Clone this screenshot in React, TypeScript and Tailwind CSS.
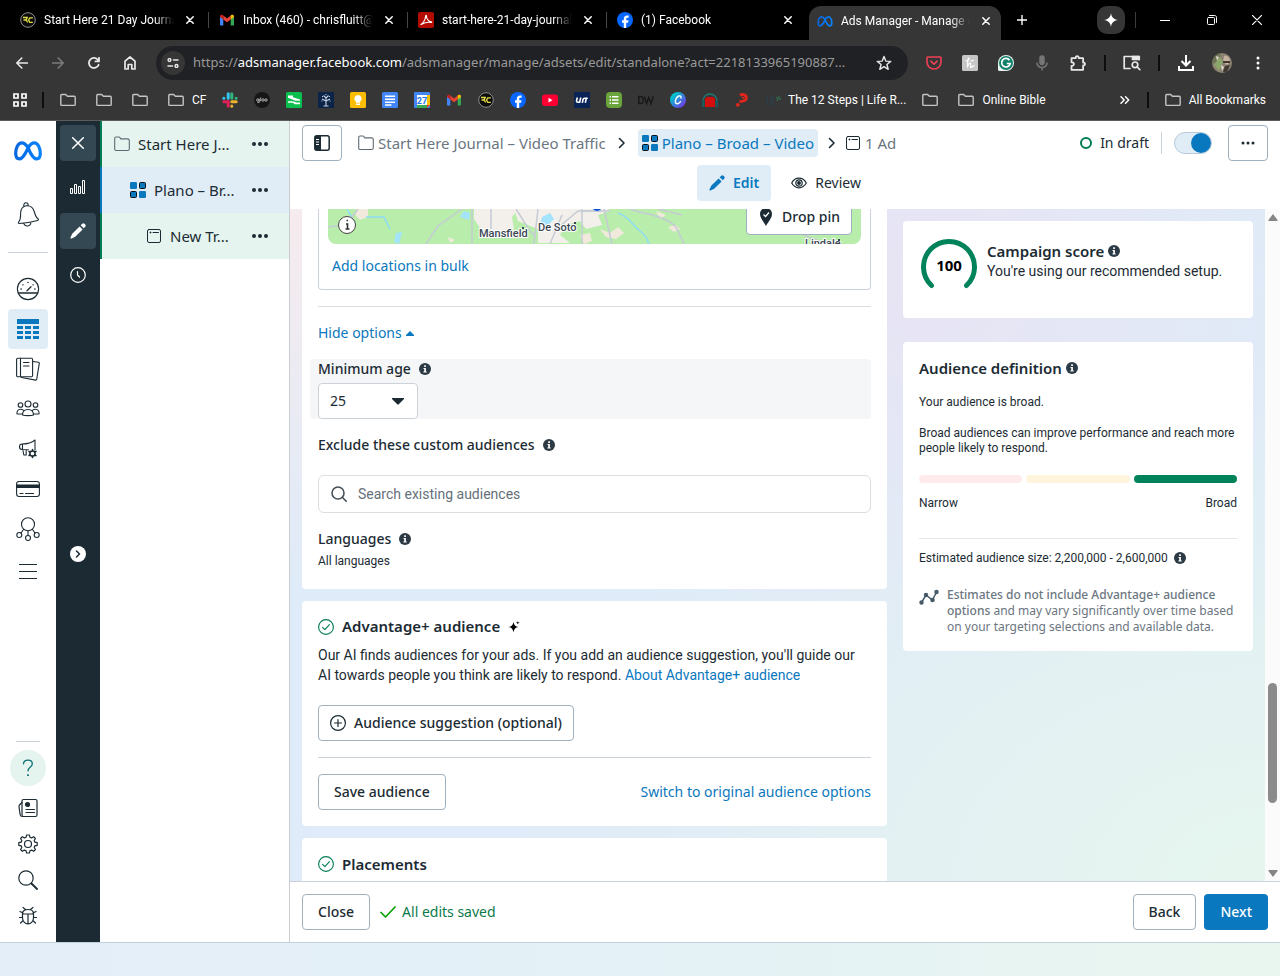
import { ReactNode } from 'react'

type Props = { children: ReactNode }

const line = {
	fill: 'none',
	stroke: 'currentColor',
	strokeLinecap: 'round' as const,
	strokeLinejoin: 'round' as const
}

/* ---------- shared icons ---------- */

function Folder({ className = 'size-4' }) {
	return (
		<svg viewBox="0 0 16 16" className={className} {...line} strokeWidth="1.4">
			<path d="M.8 12.4V3.4c0-.5.4-.9.9-.9h4l1.7 1.8h6.9c.5 0 .9.4.9.9v7.2c0 .6-.4 1-.9 1H1.7c-.5 0-.9-.4-.9-1z" />
		</svg>
	)
}

function AppFolder() {
	return (
		<svg viewBox="0 0 16 16" className="size-4 shrink-0 text-[#5f6b74]" {...line} strokeWidth="1.1">
			<path d="M.7 13V2.6C.7 1.6 1.2 1 2.2 1h2.6c.6 0 1 .3 1.3.8l.6 1.1h6.9c1 0 1.7.6 1.7 1.6V13c0 .9-.6 1.5-1.5 1.5H2.2C1.300 14.500.7 13.900.7 13z" />
		</svg>
	)
}

function AdSet() {
	return (
		<svg viewBox="0 0 16 16" className="size-4 shrink-0">
			<rect width="7" height="7" rx="1.200" fill="#0a78be" />
			<rect x="9.500" y=".5" width="6" height="6" rx="1" fill="#0a78be" stroke="#0b1016" />
			<rect x=".5" y="9.500" width="6" height="6" rx="1" fill="#0a78be" stroke="#0b1016" />
			<rect x="9" y="9" width="7" height="7" rx="1.200" fill="#0a78be" />
		</svg>
	)
}

function AdIcon() {
	return (
		<svg viewBox="0 0 14 14" className="size-[14px] shrink-0 text-[#1c2b33]" {...line} strokeWidth="1">
			<rect x=".5" y=".5" width="13" height="13" rx="1.500" />
			<path d="M6 3.500h5.500M3 3.500h1M3.500 3v1" />
		</svg>
	)
}

function Info() {
	return (
		<svg viewBox="0 0 12 12" className="size-3 shrink-0">
			<circle cx="6" cy="6" r="6" fill="#2b3a44" />
			<path d="M5.200 2.300h1.700v1.600H5.200zM4.500 5h2.400v3.600h.8v1H4.400v-1h.8V6h-.7z" fill="#fff" />
		</svg>
	)
}

function Pencil() {
	return (
		<svg viewBox="0 0 16 16" className="size-4" fill="currentColor">
			<path d="M9.600 3.400 12.600 6.400 5.200 13.800 1.600 15.500C.9 15.800.2 15.100.5 14.400L2.200 10.800zM10.700 2.300 12.300.8c.7-.7 1.500-.7 2.200 0l.7.7c.7.7.7 1.500 0 2.200L13.700 5.300z" />
		</svg>
	)
}

function Dots() {
	return (
		<svg viewBox="0 0 16 4" className="h-1 w-4" fill="#1c2b33">
			<circle cx="2" cy="2" r="2" />
			<circle cx="8" cy="2" r="2" />
			<circle cx="14" cy="2" r="2" />
		</svg>
	)
}

function Chevron() {
	return (
		<svg viewBox="0 0 8 12" className="h-3 w-2 shrink-0" {...line} strokeWidth="1.600">
			<path d="M1.500 1.500 6 6l-4.500 4.500" />
		</svg>
	)
}

function MetaLogo({ className = '' }) {
	return (
		<svg viewBox="0 0 28 20" className={className} fill="none" stroke="url(#meta)" strokeWidth="3.200">
			<defs>
				<linearGradient id="meta">
					<stop offset="0" stopColor="#0668e1" />
					<stop offset="1" stopColor="#0a82fb" />
				</linearGradient>
			</defs>
			<path d="M14 6.500C11.800 3.200 10 1.800 7.800 1.800 4.200 1.800 1.700 7 1.700 12.300c0 3.500 1.300 5.600 3.700 5.600 2.300 0 3.800-1.800 6.200-6l2.400-5C16.200 3.200 18 1.800 20.200 1.800c3.600 0 6.100 5.200 6.100 10.500 0 3.500-1.300 5.600-3.700 5.600-2.300 0-3.800-1.800-6.200-6z" />
		</svg>
	)
}

function CheckRing() {
	return (
		<svg viewBox="0 0 16 16" className="size-4" {...line} stroke="#007d53" strokeWidth="1.100">
			<circle cx="8" cy="8" r="7.400" />
			<path d="m4.600 8.400 2.300 2.300 4.500-5" />
		</svg>
	)
}

/* ---------- browser frame ---------- */

function FacebookIcon() {
	return (
		<svg viewBox="0 0 16 16" className="size-4 shrink-0">
			<circle cx="8" cy="8" r="8" fill="#0866ff" />
			<path d="M6.800 16v-5.300H5V8.200h1.800V7.100c0-2.500 1.200-3.700 3.500-3.700.5 0 1 .1 1.300.2v2.200h-.9c-1.100 0-1.500.4-1.500 1.400v1h2.300l-.4 2.500H9.200V16z" fill="#fff" />
		</svg>
	)
}

function RcIcon() {
	return (
		<svg viewBox="0 0 16 16" className="size-4 shrink-0" fill="none">
			<circle cx="8" cy="8" r="7.300" fill="#0c0c0c" stroke="#8d8d8d" />
			<path d="M3 5.500h4.200L6.200 8l1.500 2.300M3.500 8h3M12.800 5.800H9.800L8.500 8l1.300 2.300h3" stroke="#e6e14a" strokeWidth="1.300" />
		</svg>
	)
}

function GmailIcon() {
	return (
		<svg viewBox="0 0 16 16" className="size-4 shrink-0">
			<path d="M1 4v8.500c0 .6.4 1 1 1h2.300V7z" fill="#4285f4" />
			<path d="M15 4v8.500c0 .6-.4 1-1 1h-2.300V7z" fill="#34a853" />
			<path d="M4.300 3.500 8 6.400l3.700-2.900v4L8 10.300 4.300 7.500z" fill="#ea4335" />
			<path d="M1 4.300C1 2.600 2.700 2.200 3.800 3.100l.5.4v4L1 5z" fill="#c5221f" />
			<path d="M15 4.300c0-1.700-1.700-2.100-2.800-1.200l-.5.4v4L15 5z" fill="#fbbc04" />
		</svg>
	)
}

function PdfIcon() {
	return (
		<svg viewBox="0 0 16 16" className="size-4 shrink-0">
			<rect width="16" height="16" rx="2" fill="#b30b00" />
			<path d="M3 12.300c1.500-.3 4.400-4.300 4.700-8.200.1-1 .9-1 .8 0-.2 2.500 2 5.500 4.600 5.600.9.100.8.900 0 .8-2.700-.4-6.500.1-8.900 1.500-.8.500-1.800.6-1.200.3z" fill="none" stroke="#fff" strokeWidth="1.100" />
		</svg>
	)
}

const tabs = [
	{ title: 'Start Here 21 Day Journal', icon: <RcIcon /> },
	{ title: 'Inbox (460) - chrisfluitt@gmail', icon: <GmailIcon /> },
	{ title: 'start-here-21-day-journal', icon: <PdfIcon /> },
	{ title: '(1) Facebook', icon: <FacebookIcon /> }
]

function CloseX() {
	return (
		<svg viewBox="0 0 8 8" className="size-2" {...line} strokeWidth="1.500">
			<path d="m.8.8 6.400 6.400M7.200.8.8 7.200" />
		</svg>
	)
}

function TabBody({ title, icon }: { title: string; icon: ReactNode }) {
	return (
		<>
			{icon}
			<span className="ml-2 h-4 min-w-0 flex-1 overflow-hidden mask-r-from-85% text-left text-xs leading-4 whitespace-nowrap">
				{title}
			</span>
			<button aria-label="Close tab" className="ml-3 shrink-0">
				<CloseX />
			</button>
		</>
	)
}

function TabStrip() {
	return (
		<div className="flex h-10 items-center bg-black pl-[10px]">
			{tabs.map((tab, i) => (
				<div key={tab.title} className="flex w-[199px] min-w-0 items-center">
					<div className="flex min-w-0 flex-1 items-center pr-[14px] pl-[10px]">
						<TabBody {...tab} />
					</div>
					{i < 3 && <span className="h-4 w-px bg-[#47474a]" />}
				</div>
			))}
			<div className="ml-[3px] flex h-[34px] w-[192px] min-w-0 items-center self-end rounded-t-xl bg-[#363636] pr-[11px] pb-1 pl-2">
				<TabBody title="Ads Manager - Manage ads" icon={<MetaLogo className="h-[11px] w-4 shrink-0" />} />
			</div>
			<button aria-label="New tab" className="ml-4 shrink-0">
				<svg viewBox="0 0 10 10" className="size-[10px]" {...line} strokeWidth="1.400">
					<path d="M5 0v10M0 5h10" />
				</svg>
			</button>
			<div className="ml-auto flex shrink-0 items-center">
				<button aria-label="Gemini" className="grid size-7 place-items-center rounded-[10px] bg-[#363636]">
					<svg viewBox="0 0 14 14" className="size-[14px]" fill="#fff">
						<path d="M7 0c.5 4 2.500 6.500 7 7-4.500.5-6.500 3-7 7-.5-4-2.500-6.500-7-7 4.500-.5 6.500-3 7-7z" />
					</svg>
				</button>
				<span className="ml-[10px] h-4 w-px bg-[#3c3c3c]" />
				<button aria-label="Minimize" className="grid h-10 w-[46px] place-items-center pl-3">
					<svg viewBox="0 0 10 10" className="size-[10px]" {...line}>
						<path d="M0 5.500h10" />
					</svg>
				</button>
				<button aria-label="Restore" className="grid h-10 w-[60px] place-items-center">
					<svg viewBox="0 0 10 10" className="size-[10px]" {...line}>
						<rect x=".5" y="2.500" width="7" height="7" rx="1" />
						<path d="M2.500.5h5.200c1 0 1.800.8 1.800 1.800v5.200" />
					</svg>
				</button>
				<button aria-label="Close window" className="grid h-10 w-[38px] place-items-center pr-4 pl-2">
					<svg viewBox="0 0 10 10" className="size-[10px]" {...line} strokeWidth="1.200">
						<path d="m.3.3 9.400 9.400M9.700.3.3 9.700" />
					</svg>
				</button>
			</div>
		</div>
	)
}

function ToolButton({ label, children }: Props & { label: string }) {
	return (
		<button aria-label={label} className="grid size-9 shrink-0 place-items-center">
			{children}
		</button>
	)
}

function BarRule() {
	return <span className="mx-2 h-4 w-[2px] shrink-0 bg-[#0d0d0d]" />
}

function Toolbar() {
	return (
		<div className="flex h-[46px] items-center bg-[#363636] px-1 text-[#e8e8e8]">
			<ToolButton label="Back">
				<svg viewBox="0 0 12 12" className="size-3" {...line} strokeWidth="1.600">
					<path d="M11.500 6H.8M5.800 1 .8 6l5 5" />
				</svg>
			</ToolButton>
			<ToolButton label="Forward">
				<svg viewBox="0 0 12 12" className="size-3 text-[#7c7c7c]" {...line} strokeWidth="1.600">
					<path d="M.5 6h10.700M6.200 1l5 5-5 5" />
				</svg>
			</ToolButton>
			<ToolButton label="Reload">
				<svg viewBox="0 0 12 12" className="size-3" {...line} strokeWidth="1.800">
					<path d="M10.600 7.800A5 5 0 1 1 10 3M11 .8v3.600H7.400" />
				</svg>
			</ToolButton>
			<ToolButton label="Home">
				<svg viewBox="0 0 12 14" className="h-[14px] w-3" {...line} strokeWidth="1.700">
					<path d="M1 5.200 6 1l5 4.200V13H7.800V8.500H4.200V13H1z" />
				</svg>
			</ToolButton>
			<form className="ml-2 flex h-[34px] min-w-0 flex-1 items-center rounded-full bg-[#202124] pr-4 pl-[5px]">
				<span className="grid size-6 shrink-0 place-items-center rounded-full bg-[#363636]">
					<svg viewBox="0 0 12 10" className="h-[10px] w-3" {...line} strokeWidth="1.500">
						<circle cx="2.500" cy="2" r="1.400" />
						<path d="M6.500 2H11M1 8h4.500" />
						<circle cx="9.500" cy="8" r="1.400" />
					</svg>
				</span>
				<p className="ml-2 min-w-0 flex-1 truncate font-['Noto_Sans',sans-serif] text-[13px] text-[#9a9a9a]">
					https://<span className="text-white">adsmanager.facebook.com</span>
					/adsmanager/manage/adsets/edit/standalone?act=2218133965190887...
				</p>
				<button type="button" aria-label="Bookmark this page" className="ml-2">
					<svg viewBox="0 0 16 16" className="size-4" {...line} strokeWidth="1.400">
						<path d="m8 1.500 1.800 4.600 4.900.3-3.800 3.100 1.300 4.800L8 11.600l-4.200 2.700 1.300-4.800L1.300 6.400l4.900-.3z" />
					</svg>
				</button>
			</form>
			<div className="ml-2 flex items-center">
				<ToolButton label="Pocket">
					<svg viewBox="0 0 16 14" className="h-[14px] w-4" {...line} stroke="#ef4056" strokeWidth="1.600">
						<path d="M1.800 1h12.400c.5 0 .8.3.8.8V6c0 4-3 7-7 7S1 10 1 6V1.800c0-.5.3-.8.8-.8zM4.800 5.200 8 8.200l3.200-3" />
					</svg>
				</ToolButton>
				<ToolButton label="Honey">
					<svg viewBox="0 0 16 16" className="size-4" fill="none">
						<rect width="16" height="16" rx="1.500" fill="#c6c6c6" />
						<path d="M4 6C6 5.500 7.500 4 7 3.200c-.8-.8-1.500 3-1.500 9.300C6 9.500 7.500 8 8.500 8.300c1 .4-.3 3.500 0 4 .6.500 2-.5 3.500-1.800M9 6l2.500-.8" stroke="#fff" strokeWidth="1.200" strokeLinecap="round" />
					</svg>
				</ToolButton>
				<ToolButton label="Grammarly">
					<svg viewBox="0 0 16 16" className="size-4" fill="none">
						<path d="M8 0a8 8 0 1 1 0 16H1.200C.5 16 0 15.500 0 14.800V8a8 8 0 0 1 8-8z" fill="#e9f4f1" />
						<circle cx="8" cy="8" r="7" fill="#11806a" />
						<path d="M11.500 5.200A4.300 4.300 0 1 0 12.200 8.500H8.800" stroke="#fff" strokeWidth="1.700" />
					</svg>
				</ToolButton>
				<ToolButton label="Voice">
					<svg viewBox="0 0 12 16" className="h-4 w-3 text-[#767676]" fill="none" stroke="currentColor" strokeWidth="1.500">
						<rect x="4" y="1" width="4" height="8.500" rx="2" fill="currentColor" />
						<path d="M.9 7.500a5.100 5.100 0 0 0 10.200 0M6 12.500v3" />
					</svg>
				</ToolButton>
				<ToolButton label="Extensions">
					<svg viewBox="0 0 16 16" className="size-4" {...line} strokeWidth="1.800">
						<path d="M1.500 3.200h4.200c-.4-2.800 3.300-2.800 3 0h4.400v4.300c2.500-.2 2.500 3.200 0 3v4.300H1.500v-4c3.200.3 3.200-3.800 0-3.500z" />
					</svg>
				</ToolButton>
				<BarRule />
				<ToolButton label="Search side panel">
					<svg viewBox="0 0 18 16" className="h-4 w-[18px]" {...line} strokeWidth="1.700">
						<path d="M7 13.500H1.200v-12h15v3" />
						<path d="M9.500 1.500h6.700v3H9.500z" fill="currentColor" />
						<circle cx="12" cy="9.800" r="2.800" />
						<path d="m14.200 12 2.600 2.600" />
					</svg>
				</ToolButton>
				<BarRule />
				<ToolButton label="Downloads">
					<svg viewBox="0 0 16 16" className="size-4 text-white" fill="none" stroke="currentColor" strokeWidth="2">
						<path d="M8 0v10M3.500 6 8 10.500 12.500 6M1 11v4h14v-4" />
					</svg>
				</ToolButton>
				<ToolButton label="Profile">
					<svg viewBox="0 0 20 20" className="size-5 rounded-full">
						<rect width="20" height="20" fill="#8b8172" />
						<path d="M0 0h9l-3 8-6 3z" fill="#6b7353" />
						<path d="M2 12 8 4l3 5-4 9z" fill="#8ba66b" />
						<path d="M12 3c4-1 6 2 6 6l-3 3-4-3z" fill="#c5b19d" />
						<path d="M11 8h7v2h-7zM13 13l5-1-3 7h-4z" fill="#413832" />
						<path d="M4 3l3 1-2 4zM9 12l3 2-2 4z" fill="#e5ded1" />
					</svg>
				</ToolButton>
				<ToolButton label="Browser menu">
					<svg viewBox="0 0 4 14" className="h-[14px] w-1" fill="#fff">
						<circle cx="2" cy="2" r="1.500" />
						<circle cx="2" cy="7" r="1.500" />
						<circle cx="2" cy="12" r="1.500" />
					</svg>
				</ToolButton>
			</div>
		</div>
	)
}

function Mark({ children }: Props) {
	return (
		<a href="#" className="grid h-8 w-8 shrink-0 place-items-center">
			<svg viewBox="0 0 16 16" className="size-4" fill="none">
				{children}
			</svg>
		</a>
	)
}

function Bookmarks() {
	return (
		<nav className="flex h-[35px] items-center overflow-hidden border-b border-[#5c5c5c] bg-[#363636] pb-[6px] text-xs text-white">
			<button aria-label="Apps" className="grid w-10 shrink-0 place-items-center">
				<svg viewBox="0 0 14 14" className="size-[14px]" fill="none" stroke="#fff" strokeWidth="1.700">
					<path d="M1 1h4v4H1zM9 1h4v4H9zM1 9h4v4H1zM9 9h4v4H9z" />
				</svg>
			</button>
			<span className="mr-[6px] ml-[2px] h-4 w-[2px] shrink-0 bg-[#0d0d0d]" />
			{[0, 1, 2].map(n => (
				<a key={n} href="#" aria-label="Folder" className="grid w-9 shrink-0 place-items-center text-[#c4c4c4]">
					<Folder />
				</a>
			))}
			<a href="#" className="flex w-14 shrink-0 items-center gap-2 pl-[10px]">
				<Folder className="size-4 text-[#c4c4c4]" />
				CF
			</a>
			<Mark>
				<g strokeWidth="3" strokeLinecap="round">
					<path d="M6.200 1.800v4.400M1.800 6.200h.1" stroke="#36c5f0" />
					<path d="M9.800 1.800v4.400M14.200 6.200h-.1" stroke="#2eb67d" />
					<path d="M9.800 9.800h4.400M9.800 14.200v-.1" stroke="#ecb22e" />
					<path d="M6.200 14.200V9.800H1.800" stroke="#e01e5a" />
				</g>
			</Mark>
			<Mark>
				<circle cx="8" cy="8" r="8" fill="#161616" />
				<g stroke="#bdbdbd" strokeWidth=".9">
					<circle cx="3.800" cy="8" r="1.200" />
					<path d="M5.200 6.800v3.700H3.500M6.700 5.500v3.700" />
					<circle cx="9" cy="8" r="1.200" />
					<circle cx="12" cy="8" r="1.200" />
				</g>
			</Mark>
			<Mark>
				<rect width="16" height="16" rx="1.500" fill="#0bbf4e" />
				<path d="M2 3.500h5v1.800l7 2.200v1.300H9.500L2 5.700zM2 9.200h5l3.500 1.300H14v1.700H8.500L7 10.800H2z" fill="#fff" />
			</Mark>
			<Mark>
				<path d="M0 0h16v16H0z" fill="#0b2447" />
				<path d="M8 14V6M5.500 14h5M8 9 4 7M8 9l4-2M8 6 5.500 3.500M8 6l2.500-2.500M4 4.500h1M11 4.500h1M7.500 2.500h1M3.500 9h1M11.500 9h1" stroke="#c9d2e0" strokeWidth="1.100" />
			</Mark>
			<Mark>
				<rect width="16" height="16" rx="1.500" fill="#fbbc04" />
				<path d="M8 3a3.700 3.700 0 0 1 2 6.800v1H6v-1A3.700 3.700 0 0 1 8 3zM6 11.500h4V13H6z" fill="#fff" />
			</Mark>
			<Mark>
				<rect width="16" height="16" rx="1.500" fill="#4285f4" />
				<path d="M3 4.200h10M3 7.200h10M3 10.200h10M3 13h6.500" stroke="#fff" strokeWidth="1.600" />
			</Mark>
			<Mark>
				<rect width="16" height="16" rx="1" fill="#4285f4" />
				<path d="M13 3h3v10h-3z" fill="#fbbc04" />
				<path d="M3 13h10v3H3z" fill="#34a853" />
				<path d="m13 13 3 0-3 3z" fill="#ea4335" />
				<path d="M3 3h10v10H3z" fill="#fff" />
				<text x="8" y="11.500" textAnchor="middle" className="text-[9px] font-bold" fill="#1a73e8">27</text>
			</Mark>
			<a href="#" aria-label="Gmail" className="grid w-8 shrink-0 place-items-center">
				<GmailIcon />
			</a>
			<a href="#" aria-label="RC" className="grid w-8 shrink-0 place-items-center">
				<RcIcon />
			</a>
			<a href="#" aria-label="Facebook" className="grid w-8 shrink-0 place-items-center">
				<FacebookIcon />
			</a>
			<Mark>
				<rect y="2.500" width="16" height="11.500" rx="3" fill="#ff0033" />
				<path d="m6.500 5.800 4 2.400-4 2.400z" fill="#fff" />
			</Mark>
			<Mark>
				<path d="M0 0h16v16H0z" fill="#0a2458" />
				<path d="M3.300 5.500 2.600 8.500c-.3 1.300.3 1.700 1.300 1.700h1.700L6.800 5.500M8.300 10.800l.7-3.300c.2-.9.700-1.300 1.600-1.300h3.200M11.300 10.800l.9-4" stroke="#fff" strokeWidth="1.600" />
			</Mark>
			<Mark>
				<rect width="16" height="16" rx="4" fill="#6aa43a" />
				<path d="M6 4.800h6.500M6 8h6.500M6 11.200h6.500M3.500 4.800H5M3.500 8H5M3.500 11.200H5" stroke="#fff" strokeWidth="1.600" />
			</Mark>
			<Mark>
				<path d="M.8 4.500v7h1.500c4 0 4-7 0-7zM6.500 4.500l2 7 2.200-6 2.200 6 2.500-7" stroke="#191919" strokeWidth="1.500" />
			</Mark>
			<Mark>
				<defs>
					<linearGradient id="canva" x1="0" y1="0" x2="1" y2="1">
						<stop offset=".2" stopColor="#00c4cc" />
						<stop offset=".95" stopColor="#7d2ae8" />
					</linearGradient>
				</defs>
				<circle cx="8" cy="8" r="8" fill="url(#canva)" />
				<path d="M11 6c.3-1.700-1-2.500-2.300-2C6.500 5 5 8 5.500 10.500c.5 2 3.500 1.500 5-.8" stroke="#fff" strokeWidth="1.400" strokeLinecap="round" />
			</Mark>
			<Mark>
				<path d="M1 9a7 7 0 0 1 14 0" stroke="#1f7a78" strokeWidth="1.300" />
				<path d="M3 6.500 5 5h6l2 1.500V15H3z" fill="#d20f0f" />
				<path d="M0 8.500h2.500V15H0zM13.500 8.500H16V15h-2.500z" fill="#1c5c5c" />
			</Mark>
			<Mark>
				<path d="M6 3.500C9 1.500 12.500 3.200 12.300 6c-.2 2.700-4 3.500-6.800 3.500" stroke="#e3261b" strokeWidth="3" />
				<path d="M8 5.800h2" stroke="#e3261b" strokeWidth="1.500" />
				<circle cx="3.800" cy="12.800" r="1.900" fill="#e3261b" />
			</Mark>
			<a href="#" className="flex shrink-0 items-center gap-[6px] pl-2">
				<svg viewBox="0 0 16 16" className="size-4" fill="none">
					<path d="M1.500 5v7M4 5.500h3.500L4.500 12H8" stroke="#2b3f4b" strokeWidth="1.600" />
					<path d="m10 5 2 2-1.500 2M13 4v3h2" stroke="#2f7a55" />
				</svg>
				The 12 Steps | Life R...
			</a>
			<a href="#" aria-label="Folder" className="ml-2 grid w-8 shrink-0 place-items-center text-[#c4c4c4]">
				<Folder />
			</a>
			<a href="#" className="ml-3 flex shrink-0 items-center gap-2">
				<Folder className="size-4 text-[#c4c4c4]" />
				Online Bible
			</a>
			<button aria-label="More bookmarks" className="ml-auto shrink-0">
				<svg viewBox="0 0 10 8" className="h-2 w-[10px]" {...line} strokeWidth="1.500">
					<path d="m1 .8 3.200 3.200L1 7.200M5.500.8 8.700 4 5.500 7.200" />
				</svg>
			</button>
			<span className="mr-4 ml-[17px] h-4 w-[2px] shrink-0 bg-[#0d0d0d]" />
			<a href="#" className="mr-[14px] flex shrink-0 items-center gap-2">
				<Folder className="size-4 text-[#c4c4c4]" />
				All Bookmarks
			</a>
		</nav>
	)
}

/* ---------- left navigation ---------- */

function NavItem({ label, active, children }: Props & { label: string; active?: boolean }) {
	return (
		<a
			href="#"
			aria-label={label}
			className={
				active
					? 'grid size-10 place-items-center rounded bg-[#e0edf7] text-[#0a78be]'
					: 'grid size-10 place-items-center text-[#1c2b33]'
			}
		>
			<svg viewBox="0 0 24 24" className="size-6" {...line} strokeWidth="1.100">
				{children}
			</svg>
		</a>
	)
}

function FootItem({ label, children }: Props & { label: string }) {
	return (
		<a href="#" aria-label={label} className="grid size-9 place-items-center text-[#1c2b33]">
			<svg viewBox="0 0 20 20" className="size-5" {...line} strokeWidth="1.200">
				{children}
			</svg>
		</a>
	)
}

function Sidebar() {
	return (
		<nav className="flex w-14 shrink-0 flex-col items-center bg-white pb-2">
			<a href="#" aria-label="Meta" className="grid h-[60px] place-items-center">
				<MetaLogo className="h-5 w-7" />
			</a>
			<a href="#" aria-label="Notifications" className="grid h-[68px] place-items-center text-[#1c2b33]">
				<svg viewBox="0 0 22 26" className="h-[26px] w-[22px]" {...line} strokeWidth="1.100">
					<path d="M2 21.500c-.7-.3-.8-1.200-.2-1.700C4 17.500 3.500 15 3.600 11 3.800 7 6 4.300 9.200 3.800c4.400-.5 7 1.800 8.200 6.200.9 3.500 1.500 5.500 3.600 6.700.7.500.5 1.600-.3 1.800C14 20.300 8 21.300 2 21.500zM6.800 3.500C6.500 0 11 0 11.200 3M7 22c1.500 3 6.500 2.500 6.800-1" />
				</svg>
			</a>
			<hr className="mt-[3px] mb-4 w-10 border-[#cbd2d9]" />
			<NavItem label="Overview">
				<circle cx="12" cy="12" r="10.600" />
				<path d="M2.300 16h19.400M11 13.800l4-4M5 12h.3M6.800 7.800h.3M11.900 5.500h.2M16.900 7.800h.3M18.700 12h.3" strokeWidth="1.300" />
			</NavItem>
			<NavItem label="Campaigns" active>
				<path d="M1 2h22v5H1zM1 9h6v3H1zM9 9h6v3H9zM17 9h6v3h-6zM1 14h6v3H1zM9 14h6v3H9zM17 14h6v3h-6zM1 19h6v3H1zM9 19h6v3H9zM17 19h6v3h-6z" fill="currentColor" stroke="none" />
			</NavItem>
			<NavItem label="Reporting">
				<rect x=".6" y="1.200" width="16" height="18.600" rx="1.200" />
				<path d="M4.500 1.200v18.600M7.500 5.500H13M7.500 9H13M17 4.500l5.500.8c.5.100.8.500.8 1l-2.600 16c-.1.500-.5.900-1 .8L5.500 20.500" />
			</NavItem>
			<NavItem label="Audiences">
				<circle cx="12" cy="7" r="3" />
				<circle cx="4.500" cy="8" r="2.300" />
				<circle cx="19.500" cy="8" r="2.300" />
				<path d="M6.500 18c0-3.500 1.500-5.500 5.500-5.500s5.500 2 5.500 5.500c-2 .8-9 .8-11 0zM6.200 17H1C.500 14.500 2 12.300 4.500 12.300c1.200 0 2 .2 2.800.8M17.800 17H23c.5-2.500-1-4.700-3.500-4.700-1.200 0-2 .2-2.800.8" />
			</NavItem>
			<NavItem label="Advertising settings">
				<path d="M12.500 12.800 6 12.500c-1.500 0-2.500-1-2.500-2.700S4.500 7 6 7c5 0 9-.5 13-4v10M6.500 7v5.500M6.800 12.500l1 5.500h2.400V13" />
				<circle cx="16.500" cy="16.500" r="2.600" strokeWidth="1.500" />
				<path d="M16.500 12.500v1M16.500 19.500v1M13 14.500l1 .6M19 18l1 .6M13 18.500l1-.6M19 15l1-.6" strokeWidth="1.500" />
			</NavItem>
			<NavItem label="Billing">
				<rect x=".6" y="4.500" width="22.800" height="15" rx="2.500" />
				<path d="M1 8h22v2.500H1z" fill="currentColor" />
				<path d="M4 16.500h3M9.500 16.500h8" />
			</NavItem>
			<NavItem label="Business">
				<circle cx="12" cy="7.200" r="6.500" />
				<circle cx="3.300" cy="18" r="2.500" />
				<circle cx="12" cy="21" r="2.500" />
				<circle cx="20.700" cy="18" r="2.500" />
				<path d="M12 14v4.500M7.500 12.500 5 16M16.500 12.500l2.500 3.500" />
			</NavItem>
			<a href="#" aria-label="All tools" className="grid h-11 w-10 place-items-center text-[#1c2b33]">
				<svg viewBox="0 0 18 16" className="h-4 w-[18px]" stroke="currentColor">
					<path d="M0 1.500h18M0 8.500h18M0 15.500h18" />
				</svg>
			</a>
			<hr className="mt-auto mb-2 w-6 border-[#cbd2d9]" />
			<a href="#" aria-label="Help" className="mb-1 grid size-9 place-items-center rounded-full bg-[#e5f4ef] text-[#0e7076]">
				<svg viewBox="0 0 12 18" className="h-[18px] w-3" {...line} strokeWidth="1.300">
					<path d="M1.500 4.800C1.700 2.500 3.300 1.200 6 1.200c2.600 0 4.300 1.400 4.300 3.600 0 3.400-4.300 3.500-4.300 7M5.700 15.800h.6v.6h-.6z" />
				</svg>
			</a>
			<FootItem label="News">
				<rect x="4" y="1.500" width="15" height="17" rx="1.500" />
				<path d="M4 4.500 1.500 7c-.6.600-.6 1.500-.4 2.500l1 7c.2 1.200 1 2 2.500 2M8 11.500h8.500M8 14.500h8.500" />
				<circle cx="9.500" cy="6.500" r="2" fill="currentColor" />
			</FootItem>
			<FootItem label="Settings">
				<circle cx="10" cy="10" r="3.500" />
				<path d="m8.600 1-.5 2.200-1.700.7-2-1.200-1.800 1.800 1.200 2-.7 1.700-2.300.5v2.600l2.300.5.7 1.700-1.200 2 1.800 1.800 2-1.200 1.700.7.500 2.200h2.800l.5-2.200 1.700-.7 2 1.200 1.800-1.800-1.200-2 .7-1.700 2.300-.5V8.700l-2.300-.5-.7-1.700 1.200-2-1.800-1.800-2 1.200-1.700-.7-.5-2.200z" />
			</FootItem>
			<FootItem label="Search">
				<circle cx="8" cy="8" r="7.200" />
				<path d="m13.500 13.500 5.500 5.500" strokeWidth="1.800" />
			</FootItem>
			<FootItem label="Report a problem">
				<path d="M4.500 7.500C4.500 4.500 7 3.500 10 3.500s5.500 1 5.500 4v4.300c0 3.400-2.500 6-5.500 6s-5.500-2.600-5.500-6zM4.500 8h11M10 8v9.800M7.500 3.500 5 1.500M12.500 3.500l2.500-2M4.500 11.500H1.500M15.500 11.500h3M5 7 2 5.500M15 7l3-1.500M5.200 14.500 2.500 17M14.800 14.500l2.700 2.500" />
			</FootItem>
		</nav>
	)
}

function Rail() {
	return (
		<nav className="flex w-11 shrink-0 flex-col items-center gap-2 bg-[#1c2b33] pt-1 text-white">
			<button aria-label="Close editor" className="grid size-9 place-items-center rounded bg-[#344854]">
				<svg viewBox="0 0 12 12" className="size-3" {...line} strokeWidth="1.500">
					<path d="m.7.7 10.600 10.600M11.300.7.7 11.300" />
				</svg>
			</button>
			<button aria-label="Charts" className="grid size-9 place-items-center">
				<svg viewBox="0 0 16 16" className="size-4" fill="none" stroke="currentColor">
					<path d="M.5 9.500h2v5h-2zM4.500 5.500h2v9h-2zM8.500 7.500h2v7h-2zM12.500 1.500h2v13h-2z" />
				</svg>
			</button>
			<button aria-label="Edit" className="grid size-9 place-items-center rounded bg-[#344854]">
				<Pencil />
			</button>
			<button aria-label="History" className="grid size-9 place-items-center">
				<svg viewBox="0 0 16 16" className="size-4" {...line} strokeWidth="1.200">
					<circle cx="8" cy="8" r="7.300" />
					<path d="M7.500 4.500V8l2 2" />
				</svg>
			</button>
			<button aria-label="Expand" className="mt-[245px] grid size-4 place-items-center rounded-full bg-white text-[#1c2b33]">
				<svg viewBox="0 0 6 8" className="h-2 w-[6px]" {...line} strokeWidth="1.500">
					<path d="m1.500 1 3 3-3 3" />
				</svg>
			</button>
		</nav>
	)
}

function Tree() {
	return (
		<ul className="w-[190px] shrink-0 border-r border-[#c9ccd0] bg-white text-[15px] text-[#1c2b33]">
			<li className="flex h-[46px] items-center gap-2 border-l-2 border-[#007d53] bg-[#e5f4ef] pr-[21px] pl-3">
				<AppFolder />
				<a href="#" className="flex-1 whitespace-nowrap">Start Here J...</a>
				<button aria-label="More">
					<Dots />
				</button>
			</li>
			<li className="flex h-[46px] items-center gap-2 border-l-2 border-[#0a78be] bg-[#e0edf7] pr-[21px] pl-7">
				<AdSet />
				<a href="#" className="flex-1 whitespace-nowrap">Plano – Br...</a>
				<button aria-label="More">
					<Dots />
				</button>
			</li>
			<li className="flex h-[46px] items-center gap-[9px] border-l-2 border-[#007d53] bg-[#e5f4ef] pr-[21px] pl-[45px]">
				<AdIcon />
				<a href="#" className="flex-1 whitespace-nowrap">New Tr...</a>
				<button aria-label="More">
					<Dots />
				</button>
			</li>
		</ul>
	)
}

/* ---------- editor ---------- */

function Header() {
	return (
		<header className="flex h-[88px] shrink-0 flex-col gap-1 bg-white px-3 pt-1">
			<div className="flex h-9 items-center">
				<button aria-label="Toggle panel" className="grid h-9 w-10 shrink-0 place-items-center rounded border border-[#9fb0bf]">
					<svg viewBox="0 0 16 16" className="size-4">
						<rect x=".8" y=".8" width="14.400" height="14.400" rx="2" fill="#fff" stroke="#1c2b33" strokeWidth="1.500" />
						<path d="M1 1h6v14H1z" fill="#1c2b33" />
						<path d="M2 4.500h3M2 7h3M2 9.500h3" stroke="#fff" />
					</svg>
				</button>
				<div className="ml-4 flex items-center text-[15px] whitespace-nowrap text-[#6b7680]">
					<a href="#" className="flex items-center gap-1">
						<AppFolder />
						Start Here Journal – Video Traffic
					</a>
					<span className="mx-3 text-[#1c2b33]">
						<Chevron />
					</span>
					<a href="#" className="flex h-7 items-center gap-1 rounded bg-[#e0edf7] px-1 text-[#0a78be]">
						<AdSet />
						Plano – Broad – Video
					</a>
					<span className="mx-[10px] text-[#1c2b33]">
						<Chevron />
					</span>
					<a href="#" className="flex items-center gap-[5px]">
						<AdIcon />
						1 Ad
					</a>
				</div>
				<div className="ml-auto flex items-center text-sm">
					<span className="mr-2 size-3 rounded-full border-2 border-[#007d53]" />
					In draft
					<span className="mx-3 h-[22px] w-px bg-[#cbd2d9]" />
					<label className="flex h-[22px] w-[38px] items-center justify-end rounded-full border border-[#b9cbda] bg-[#e0edf7]">
						<input type="checkbox" defaultChecked aria-label="Ad set on" className="peer sr-only" />
						<span className="size-5 rounded-full bg-[#0a78be]" />
					</label>
					<button aria-label="More options" className="ml-4 grid h-9 w-10 place-items-center rounded border border-[#9fb0bf]">
						<svg viewBox="0 0 14 4" className="h-1 w-[14px]" fill="#1c2b33">
							<circle cx="2" cy="2" r="1.500" />
							<circle cx="7" cy="2" r="1.500" />
							<circle cx="12" cy="2" r="1.500" />
						</svg>
					</button>
				</div>
			</div>
			<div className="flex h-9 justify-center gap-2 text-sm">
				<button className="flex items-center gap-2 rounded bg-[#e0edf7] px-3 font-semibold text-[#0a78be]">
					<Pencil />
					Edit
				</button>
				<button className="flex items-center gap-2 px-3">
					<svg viewBox="0 0 16 12" className="h-3 w-4" {...line} strokeWidth="1.200">
						<path d="M.7 6C2.500 2.800 5 1.200 8 1.200S13.500 2.800 15.300 6C13.500 9.200 11 10.800 8 10.800S2.500 9.200.7 6z" />
						<circle cx="8" cy="6" r="3.200" />
						<circle cx="8" cy="6" r="1.300" fill="currentColor" />
					</svg>
					Review
				</button>
			</div>
		</header>
	)
}

function LocationMap() {
	return (
		<div className="relative h-[35px] overflow-hidden rounded-b-lg bg-[#b9edac]">
			<svg viewBox="0 0 533 35" preserveAspectRatio="xMinYMin slice" className="size-full" fill="none">
				<path d="M146 0v10l8 12 6-2 12 6 14-6-2-12 6-8zM186 0l4 12 20 8v14h32l-10-8 6-10 14-4 6 8 16-4-4-10 12-4-8-6z" fill="#f3f0ec" />
				<path d="M28 0h12v8l-8 3-4-4zM252 26l10-2 2 8-8 3zM272 20l10 4 8-6 6 6-8 6-10-2zM328 2l10 4-6 4zM340 18l8-2 4 4-6 3zM120 28l7 3-5 3z" fill="#f1e9dc" />
				<path d="M136 2l6 2-1 7-9-3zM68 24l6-1-3 12-5-2zM214 8l8-4 4 6-8 8-6-2z" fill="#a3e3fb" />
				<path d="M19 0 24 9M38 8l18 0 6 12M290 4c12 4 14 12 22 18s6 8 9 13" stroke="#8edcf7" strokeWidth="1.500" />
				<g stroke="#c5cbd4" strokeWidth="1.500">
					<path d="M0 18 18 16 30 0M134 0 110 17 98 35M144 0v35M163 0v20M188 0l14 22 6 6M210 0l-4 35M254 0v35M276 0l8 35M226 22 250 2h24M302 0c16 6 34 6 46 18l8 17M234 6 222 35M330 0l24 6M420 0l34 14" />
					<path d="M254 2h28M440 4l40 24 20 7" />
				</g>
				<circle cx="269" cy="-3" r="5" fill="#0b57d8" />
				<g fill="#3c4653" stroke="#fff" strokeWidth="2" paintOrder="stroke" className="font-[Roboto] text-[11px] font-medium">
					<text x="151" y="28">Mansfield</text>
					<text x="210" y="22">De Soto</text>
					<text x="477" y="38">Lindale</text>
				</g>
				<path d="M194 18h2v2h-2zM246 13h2v2h-2zM510 30h2v2h-2z" fill="#3c4653" />
				<circle cx="19" cy="16" r="8.500" fill="#fff" stroke="#444" />
				<path d="M18 15h1.500v5M17.500 20h4M18.500 11.500h1.500" stroke="#333" strokeWidth="1.600" />
			</svg>
			<button className="absolute right-[9px] bottom-[9px] flex h-9 items-center gap-2 rounded border border-[#9fb0bf] bg-white px-[11px] text-sm font-medium">
				<svg viewBox="0 0 16 18" className="h-[18px] w-4">
					<path d="M8 0c3.500 0 6 2.500 6 6 0 4-3.500 7.500-6 12-2.500-4.500-6-8-6-12 0-3.500 2.500-6 6-6z" fill="#1c2b33" />
					<path d="m5.500 6.500 2 2 3.500-4" fill="none" stroke="#fff" strokeWidth="1.300" />
				</svg>
				Drop pin
			</button>
		</div>
	)
}

function AudienceCard() {
	return (
		<section className="rounded-b bg-white px-4 pb-5">
			<div className="rounded-b border border-t-0 border-[#cbd2d9] px-[9px] pb-[13px]">
				<LocationMap />
				<a href="#" className="mt-3 ml-1 block leading-5 text-[#0a78be]">
					Add locations in bulk
				</a>
			</div>
			<hr className="my-4 border-[#dadde1]" />
			<button className="flex h-5 items-center gap-1 text-[#0a78be]">
				Hide options
				<svg viewBox="0 0 8 5" className="h-[5px] w-2" fill="currentColor">
					<path d="M4 0 8 4v1H0V4z" />
				</svg>
			</button>
			<div className="mt-4 -ml-2 rounded bg-[#f5f6f7] pl-2">
				<div className="flex h-6 items-start gap-2">
					<label htmlFor="age" className="leading-5 font-medium">
						Minimum age
					</label>
					<span className="mt-1">
						<Info />
					</span>
				</div>
				<div className="relative w-[100px]">
					<select id="age" defaultValue="25" className="block h-9 w-full appearance-none rounded border border-[#cbd2d9] bg-white pl-[11px]">
						<option>18</option>
						<option>21</option>
						<option>25</option>
					</select>
					<svg viewBox="0 0 12 7" className="pointer-events-none absolute top-[15px] right-[14px] h-[7px] w-3" fill="#1c2b33">
						<path d="M0 0h12v1L6.500 6.500h-1L0 1z" />
					</svg>
				</div>
			</div>
			<div className="mt-4 flex h-5 items-center gap-2">
				<label htmlFor="exclude" className="font-medium">
					Exclude these custom audiences
				</label>
				<Info />
			</div>
			<div className="mt-5 flex h-[38px] items-center rounded-md border border-[#dadde1] pl-3 focus-within:border-[#0a78be]">
				<svg viewBox="0 0 16 16" className="size-4 text-[#465059]" {...line} strokeWidth="1.600">
					<circle cx="7" cy="7" r="6" />
					<path d="m11.500 11.500 3.700 3.700" />
				</svg>
				<input
					id="exclude"
					type="text"
					placeholder="Search existing audiences"
					className="ml-[11px] h-full min-w-0 flex-1 bg-transparent font-[Roboto,sans-serif] outline-none placeholder:text-[#65707a]"
				/>
			</div>
			<div className="mt-4 flex h-5 items-center gap-2">
				<h3 className="font-medium">Languages</h3>
				<Info />
			</div>
			<p className="mt-1 font-[Roboto,sans-serif] text-xs leading-4">All languages</p>
		</section>
	)
}

function AdvantageCard() {
	return (
		<section className="mt-3 rounded bg-white p-4">
			<div className="flex h-5 items-center gap-2">
				<CheckRing />
				<h2 className="text-[15px] font-semibold">Advantage+ audience</h2>
				<svg viewBox="0 0 12 12" className="size-3" fill="#000">
					<path d="M5.500 1c.6 3 1.700 4.400 5 5-3.300.6-4.400 2-5 5.500C4.900 8 3.800 6.600.5 6c3.300-.6 4.400-2 5-5zM9.800 0c.2 1.200.6 1.600 1.900 1.800-1.300.2-1.700.6-1.900 1.800-.2-1.200-.6-1.600-1.900-1.800C9.200 1.600 9.600 1.200 9.800 0z" />
				</svg>
			</div>
			<p className="mt-2 font-[Roboto,sans-serif] leading-5">
				Our AI finds audiences for your ads. If you add an audience suggestion, you'll guide our AI towards
				people you think are likely to respond.{' '}
				<a href="#" className="text-[#0a78be]">
					About Advantage+ audience
				</a>
			</p>
			<button className="mt-5 flex h-9 items-center gap-2 rounded border border-[#9fb0bf] px-[11px] font-medium">
				<svg viewBox="0 0 16 16" className="size-4" {...line} strokeWidth="1.200">
					<circle cx="8" cy="8" r="7.400" />
					<path d="M8 4.500v7M4.500 8h7" />
				</svg>
				Audience suggestion (optional)
			</button>
			<hr className="my-4 border-[#cbd2d9]" />
			<div className="flex items-center justify-between">
				<button className="h-9 rounded border border-[#9fb0bf] px-[15px] font-medium">Save audience</button>
				<a href="#" className="text-[#0a78be]">
					Switch to original audience options
				</a>
			</div>
		</section>
	)
}

function Score() {
	return (
		<section className="flex h-[97px] gap-2 rounded bg-white px-4 pt-4">
			<div className="relative grid size-[60px] shrink-0 place-items-center">
				<svg viewBox="0 0 60 60" className="absolute inset-0 size-[60px]" {...line} stroke="#00825a" strokeWidth="5">
					<path d="M12.500 48.500A25.500 25.500 0 1 1 47.500 48.500" />
				</svg>
				<span className="relative mb-1 text-[15px] leading-5 font-bold text-black">100</span>
			</div>
			<div className="pt-1">
				<h2 className="flex items-center gap-1 text-[15px] leading-5 font-semibold">
					Campaign score <Info />
				</h2>
				<p className="font-[Roboto,sans-serif] leading-5">You're using our recommended setup.</p>
			</div>
		</section>
	)
}

function Definition() {
	return (
		<section className="mt-6 rounded bg-white p-4 font-[Roboto,sans-serif] text-xs">
			<h2 className="flex items-center gap-1 font-['Noto_Sans',sans-serif] text-[15px] leading-5 font-semibold">
				Audience definition <Info />
			</h2>
			<p className="mt-4 leading-4">Your audience is broad.</p>
			<p className="mt-4 leading-[15px]">
				Broad audiences can improve performance and reach more people likely to respond.
			</p>
			<div className="mt-[19px] grid grid-cols-3 gap-1">
				<span className="h-2 rounded-full bg-[#ffebeb]" />
				<span className="h-2 rounded-full bg-[#fff4dc]" />
				<span className="h-2 rounded-full bg-[#00825a]" />
			</div>
			<div className="mt-3 flex justify-between leading-4">
				<span>Narrow</span>
				<span>Broad</span>
			</div>
			<hr className="mt-[27px] mb-[11px] border-[#e4e6e9]" />
			<p className="flex items-center gap-[6px] leading-4">
				Estimated audience size: 2,200,000 - 2,600,000 <Info />
			</p>
			<div className="mt-[21px] flex gap-2 font-['Noto_Sans',sans-serif] leading-4 text-[#6b7680]">
				<svg viewBox="0 0 20 16" className="mt-[2px] h-4 w-5 shrink-0" fill="#465a69" stroke="#465a69" strokeWidth="1.500">
					<path d="M2.500 13.500 7 6l6.500 5L17.500 3" fill="none" />
					<circle cx="2.500" cy="13.500" r="1.500" />
					<circle cx="7" cy="6" r="1.500" />
					<circle cx="13.500" cy="11" r="1.500" />
					<circle cx="17.500" cy="3" r="1.500" />
				</svg>
				<p>
					<span className="font-medium">Estimates do not include Advantage+ audience options</span> and may
					vary significantly over time based on your targeting selections and available data.
				</p>
			</div>
		</section>
	)
}

function ScrollBar() {
	return (
		<div className="flex w-[15px] shrink-0 flex-col items-center bg-[#fbfbfb] pt-[5px] pb-1">
			<svg viewBox="0 0 10 7" className="h-[7px] w-[10px]" fill="#858585">
				<path d="M5 0 9.500 6c.2.500 0 1-.5 1H1C.5 7 .3 6.500.5 6z" />
			</svg>
			<span className="mt-auto mb-[67px] h-[120px] w-[9px] rounded-full bg-[#8b8b8b]" />
			<svg viewBox="0 0 10 7" className="h-[7px] w-[10px]" fill="#858585">
				<path d="M5 7 .5 1C.300.5.5 0 1 0h8c.5 0 .7.5.5 1z" />
			</svg>
		</div>
	)
}

function Footer() {
	return (
		<footer className="flex h-[61px] shrink-0 items-center gap-2 border-t border-[#cbd2d9] bg-white px-3 text-sm">
			<button className="h-9 rounded border border-[#9fb0bf] px-[15px] font-medium">Close</button>
			<p className="ml-[2px] flex items-center gap-[6px] text-[#0b7a4b]">
				<svg viewBox="0 0 16 12" className="h-3 w-4" {...line} stroke="#0aa00a" strokeWidth="1.700">
					<path d="m1 6.500 4.500 4.500L15 1" />
				</svg>
				All edits saved
			</p>
			<button className="ml-auto h-9 rounded border border-[#9fb0bf] px-[15px] font-medium">Back</button>
			<button className="h-9 rounded bg-[#0a78be] px-4 font-medium text-white">Next</button>
		</footer>
	)
}

export default function App() {
	return (
		<div className="flex h-screen flex-col bg-linear-to-r from-[#e4eef9] via-[#e4f1f6] to-[#e9f6ef] text-[#1c2b33]">
			<div className="shrink-0 bg-[#363636] font-[Roboto,sans-serif] text-white">
				<TabStrip />
				<Toolbar />
				<Bookmarks />
			</div>
			<div className="mb-[33px] flex min-h-0 flex-1 border-b border-[#c3cfdb] font-['Noto_Sans',sans-serif]">
				<Sidebar />
				<Rail />
				<Tree />
				<main className="flex min-w-0 flex-1 flex-col">
					<Header />
					<div className="flex min-h-0 flex-1">
						<div className="flex min-w-0 flex-1 gap-4 overflow-hidden bg-[#dfebf8] bg-[radial-gradient(at_0%_0%,#f6ebee,transparent_40%),radial-gradient(at_65%_10%,#e8e4f4,transparent_45%),radial-gradient(at_100%_100%,#e6f6ee,transparent_55%)] px-3 text-sm">
							<div className="min-w-0 flex-1">
								<AudienceCard />
								<AdvantageCard />
								<section className="mt-3 flex items-center gap-2 rounded-t bg-white p-4">
									<CheckRing />
									<h2 className="text-[15px] leading-5 font-semibold">Placements</h2>
								</section>
							</div>
							<aside className="w-[350px] shrink-0 pt-3">
								<Score />
								<Definition />
							</aside>
						</div>
						<ScrollBar />
					</div>
					<Footer />
				</main>
			</div>
		</div>
	)
}
